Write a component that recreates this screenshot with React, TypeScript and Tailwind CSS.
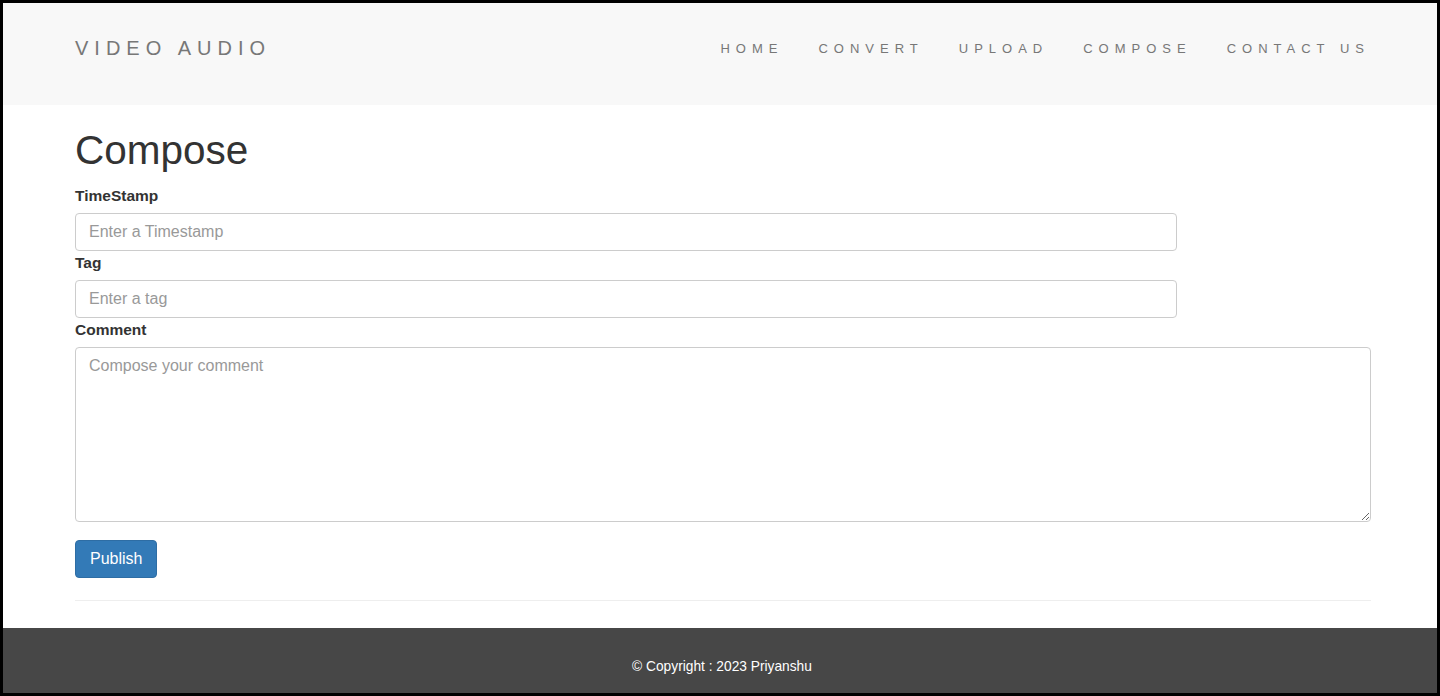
import React from 'react';

const links = ['HOME', 'CONVERT', 'UPLOAD', 'COMPOSE', 'CONTACT US'];

const Navbar: React.FC = () => (
  <nav className="h-[102px] shrink-0 bg-[#f8f8f8] flex items-center justify-between pl-[72px] pr-[67px] pb-[12px]">
    <a className="text-[20px] leading-none tracking-[6px] text-[#777]">VIDEO AUDIO</a>
    <ul className="flex items-center gap-[35px]">
      {links.map((l) => (
        <li key={l} className="text-[13px] leading-none tracking-[6px] text-[#777]">
          {l}
        </li>
      ))}
    </ul>
  </nav>
);

const Label: React.FC<{ children: React.ReactNode }> = ({ children }) => (
  <label className="block text-[15.5px] leading-[20px] font-bold text-[#333] mb-[7px]">{children}</label>
);

export default function App() {
  return (
    <div className="h-[696px] border-[3px] border-black flex flex-col bg-white overflow-hidden font-['Liberation_Sans',Arial,sans-serif]">
      <Navbar />
      <main className="flex-1 pl-[72px] pr-[66px]">
        <h1 className="mt-[23px] text-[40.5px] leading-[44px] text-[#333]">Compose</h1>
        <form className="mt-[14px]" onSubmit={(e) => e.preventDefault()}>
          <Label>TimeStamp</Label>
          <input
            type="text"
            placeholder="Enter a Timestamp"
            className="block w-[85%] h-[38px] px-[13px] text-[16px] text-[#555] border border-[#ccc] rounded-[4px] placeholder:text-[#999] outline-none mb-[2px]"
          />
          <Label>Tag</Label>
          <input
            type="text"
            placeholder="Enter a tag"
            className="block w-[85%] h-[38px] px-[13px] text-[16px] text-[#555] border border-[#ccc] rounded-[4px] placeholder:text-[#999] outline-none mb-[2px]"
          />
          <Label>Comment</Label>
          <textarea
            placeholder="Compose your comment"
            className="block w-full h-[175px] px-[13px] py-[6px] text-[16px] leading-[24px] text-[#555] border border-[#ccc] rounded-[4px] placeholder:text-[#999] outline-none"
          />
          <button
            type="submit"
            className="mt-[18px] h-[38px] px-[14px] text-[16px] text-white bg-[#337ab7] border border-[#2e6da4] rounded-[4px]"
          >
            Publish
          </button>
        </form>
        <hr className="mt-[22px] border-0 border-t border-[#eee]" />
      </main>
      <footer className="h-[65px] shrink-0 bg-[#474747] flex justify-center pt-[29px] pl-[4px]">
        <p className="text-[13.75px] leading-[20px] text-white">© Copyright : 2023 Priyanshu</p>
      </footer>
    </div>
  );
}
